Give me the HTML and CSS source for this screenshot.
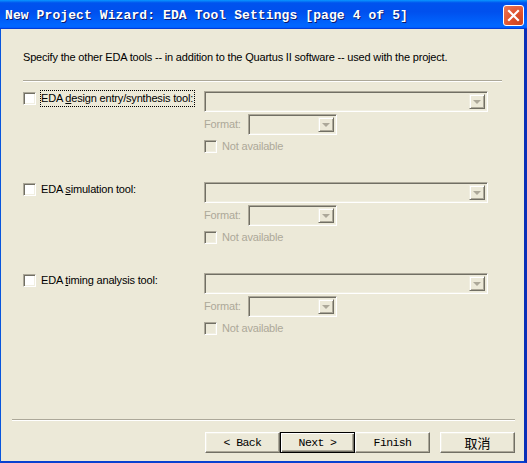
FILE: index.html
```html
<!DOCTYPE html>
<html>
<head>
<meta charset="utf-8">
<link rel="stylesheet" href="styles.css">
</head>
<body>
<div class="window">
  <div class="titlebar">
    <span class="title">New Project Wizard: EDA Tool Settings [page 4 of 5]</span>
    <div class="close">
      <svg width="21" height="21" viewBox="0 0 21 21"><path d="M6 6 L15 15 M15 6 L6 15" stroke="#fff" stroke-width="2.2" stroke-linecap="square"/></svg>
    </div>
  </div>
  <div class="frame">
    <div class="main">
      <p class="intro">Specify the other EDA tools -- in addition to the Quartus II software -- used with the project.</p>
      <div class="sep top-sep"></div>

      <div class="sections">
        <div class="section">
          <div class="left">
            <span class="check"></span>
            <span class="label focus">EDA <u>d</u>esign entry/synthesis tool:</span>
          </div>
          <div class="right">
            <div class="combo wide"><span class="drop"><span class="arrow"></span></span></div>
            <div class="format-row">
              <span class="dim fmt">Format:</span>
              <div class="combo small"><span class="drop"><span class="arrow"></span></span></div>
            </div>
            <div class="na-row">
              <span class="check disabled"></span>
              <span class="dim">Not available</span>
            </div>
          </div>
        </div>

        <div class="section">
          <div class="left">
            <span class="check"></span>
            <span class="label">EDA <u>s</u>imulation tool:</span>
          </div>
          <div class="right">
            <div class="combo wide"><span class="drop"><span class="arrow"></span></span></div>
            <div class="format-row">
              <span class="dim fmt">Format:</span>
              <div class="combo small"><span class="drop"><span class="arrow"></span></span></div>
            </div>
            <div class="na-row">
              <span class="check disabled"></span>
              <span class="dim">Not available</span>
            </div>
          </div>
        </div>

        <div class="section">
          <div class="left">
            <span class="check"></span>
            <span class="label">EDA <u>t</u>iming analysis tool:</span>
          </div>
          <div class="right">
            <div class="combo wide"><span class="drop"><span class="arrow"></span></span></div>
            <div class="format-row">
              <span class="dim fmt">Format:</span>
              <div class="combo small"><span class="drop"><span class="arrow"></span></span></div>
            </div>
            <div class="na-row">
              <span class="check disabled"></span>
              <span class="dim">Not available</span>
            </div>
          </div>
        </div>
      </div>
    </div>

    <div class="footer">
      <div class="sep bottom-sep"></div>
      <div class="buttons">
        <div class="btn">&lt; Back</div>
        <div class="btn default">Next &gt;</div>
        <div class="btn">Finish</div>
        <div class="btn cancel">取消</div>
      </div>
    </div>
  </div>
</div>
</body>
</html>
```

FILE: styles.css
```css
* { box-sizing: border-box; }
html, body {
  margin: 0;
  padding: 0;
  width: 527px;
  height: 463px;
  overflow: hidden;
  background: #ECE9D8;
}
.window {
  width: 527px;
  height: 463px;
  display: flex;
  flex-direction: column;
  font-family: Tahoma, "Liberation Sans", "DejaVu Sans", sans-serif;
  font-size: 11px;
  letter-spacing: -0.18px;
  color: #000;
}
.titlebar {
  height: 29px;
  flex: none;
  display: flex;
  align-items: center;
  justify-content: space-between;
  padding: 0 3px 0 5px;
  background: linear-gradient(to bottom, #0997ff 0%, #0053ee 10%, #0050ee 40%, #0066ff 86%, #0066ff 92%, #005bff 95%, #003dd7 97%, #003dd7 100%);
}
.title {
  font-family: "Liberation Mono", "DejaVu Sans Mono", monospace;
  font-weight: bold;
  font-size: 13px;
  color: #fff;
  text-shadow: 1px 1px 0 #0a1a6e;
  white-space: nowrap;
  letter-spacing: 0.1px;
  padding-top: 1px;
}
.close {
  width: 21px;
  height: 21px;
  border: 1px solid #fff;
  border-radius: 3px;
  background: radial-gradient(circle at 80% 85%, #cc4622 0%, #e0522d 45%, #ea7a5c 100%);
  display: flex;
  margin-top: 1px;
}
.close svg { margin: -1px; }
.frame {
  flex: 1;
  display: flex;
  flex-direction: column;
  border-left: 1px solid #0855dd;
  border-right: 3px solid #0a2fb8;
  border-bottom: 2px solid #0841d0;
}
.main {
  flex: 1;
  padding: 22px 0 0 22px;
}
.intro {
  margin: 0;
  line-height: 13px;
  white-space: nowrap;
}
.sep {
  height: 2px;
  border-top: 1px solid #ACA899;
  border-bottom: 1px solid #fff;
}
.top-sep {
  margin-top: 16px;
  width: 479px;
}
.sections {
  display: flex;
  flex-direction: column;
  gap: 29px;
  margin-top: 9px;
}
.section {
  display: grid;
  grid-template-columns: 181px 284px;
}
.left {
  display: flex;
  align-items: center;
  align-self: start;
  height: 18px;
  margin-top: -2px;
  padding-top: 1px;
}
.check {
  width: 13px;
  height: 13px;
  flex: none;
  background: #fff;
  border-top: 1px solid #ACA899;
  border-left: 1px solid #ACA899;
  border-right: 1px solid #fff;
  border-bottom: 1px solid #fff;
  box-shadow: inset 1px 1px 0 #716F64, inset -1px -1px 0 #F1EFE2;
}
.check.disabled {
  background: #ECE9D8;
}
.label {
  margin-left: 4px;
  border: 1px dotted transparent;
  padding: 1px 1px 1px 0;
  line-height: 13px;
  white-space: nowrap;
}
.label.focus {
  border-color: #000;
}
.right {
  display: flex;
  flex-direction: column;
}
.combo {
  height: 21px;
  display: flex;
  justify-content: flex-end;
  padding: 2px;
  background: #ECE9D8;
  border-top: 1px solid #ACA899;
  border-left: 1px solid #ACA899;
  border-right: 1px solid #fff;
  border-bottom: 1px solid #fff;
  box-shadow: inset 1px 1px 0 #716F64, inset -1px -1px 0 #F1EFE2;
}
.combo.wide { width: 284px; }
.combo.small { width: 89px; }
.drop {
  width: 16px;
  height: 15px;
  display: flex;
  align-items: center;
  justify-content: center;
  background: #ECE9D8;
  border-top: 1px solid #F1EFE2;
  border-left: 1px solid #F1EFE2;
  border-right: 1px solid #716F64;
  border-bottom: 1px solid #716F64;
  box-shadow: inset 1px 1px 0 #fff, inset -1px -1px 0 #ACA899;
}
.arrow {
  width: 0;
  height: 0;
  border-left: 4px solid transparent;
  border-right: 4px solid transparent;
  border-top: 4px solid #ACA899;
  margin-top: 1px;
}
.format-row {
  display: flex;
  align-items: center;
  margin-top: 2px;
}
.fmt { width: 44px; }
.dim { color: #ACA899; line-height: 13px; }
.na-row {
  display: flex;
  align-items: center;
  gap: 5px;
  margin-top: 5px;
}
.footer {
  flex: none;
  padding: 0 9px 8px 11px;
}
.bottom-sep { width: 503px; }
.buttons {
  display: flex;
  justify-content: flex-end;
  margin-top: 11px;
}
.btn {
  width: 75px;
  height: 21px;
  display: flex;
  align-items: center;
  justify-content: center;
  font-family: "Liberation Mono", "Noto Sans CJK SC", monospace;
  font-size: 11.5px;
  letter-spacing: -0.6px;
  color: #000;
  background: #ECE9D8;
  border-top: 1px solid #fff;
  border-left: 1px solid #fff;
  border-right: 1px solid #716F64;
  border-bottom: 1px solid #716F64;
  box-shadow: inset -1px -1px 0 #ACA899, inset 1px 1px 0 #F1EFE2;
}
.btn.default {
  border: 1px solid #000;
  box-shadow: inset 1px 1px 0 #fff, inset -1px -1px 0 #716F64, inset -2px -2px 0 #ACA899;
}
.btn.cancel {
  margin-left: 10px;
  font-family: "Noto Sans CJK SC", sans-serif;
  font-size: 13px;
  letter-spacing: 0;
}
```
